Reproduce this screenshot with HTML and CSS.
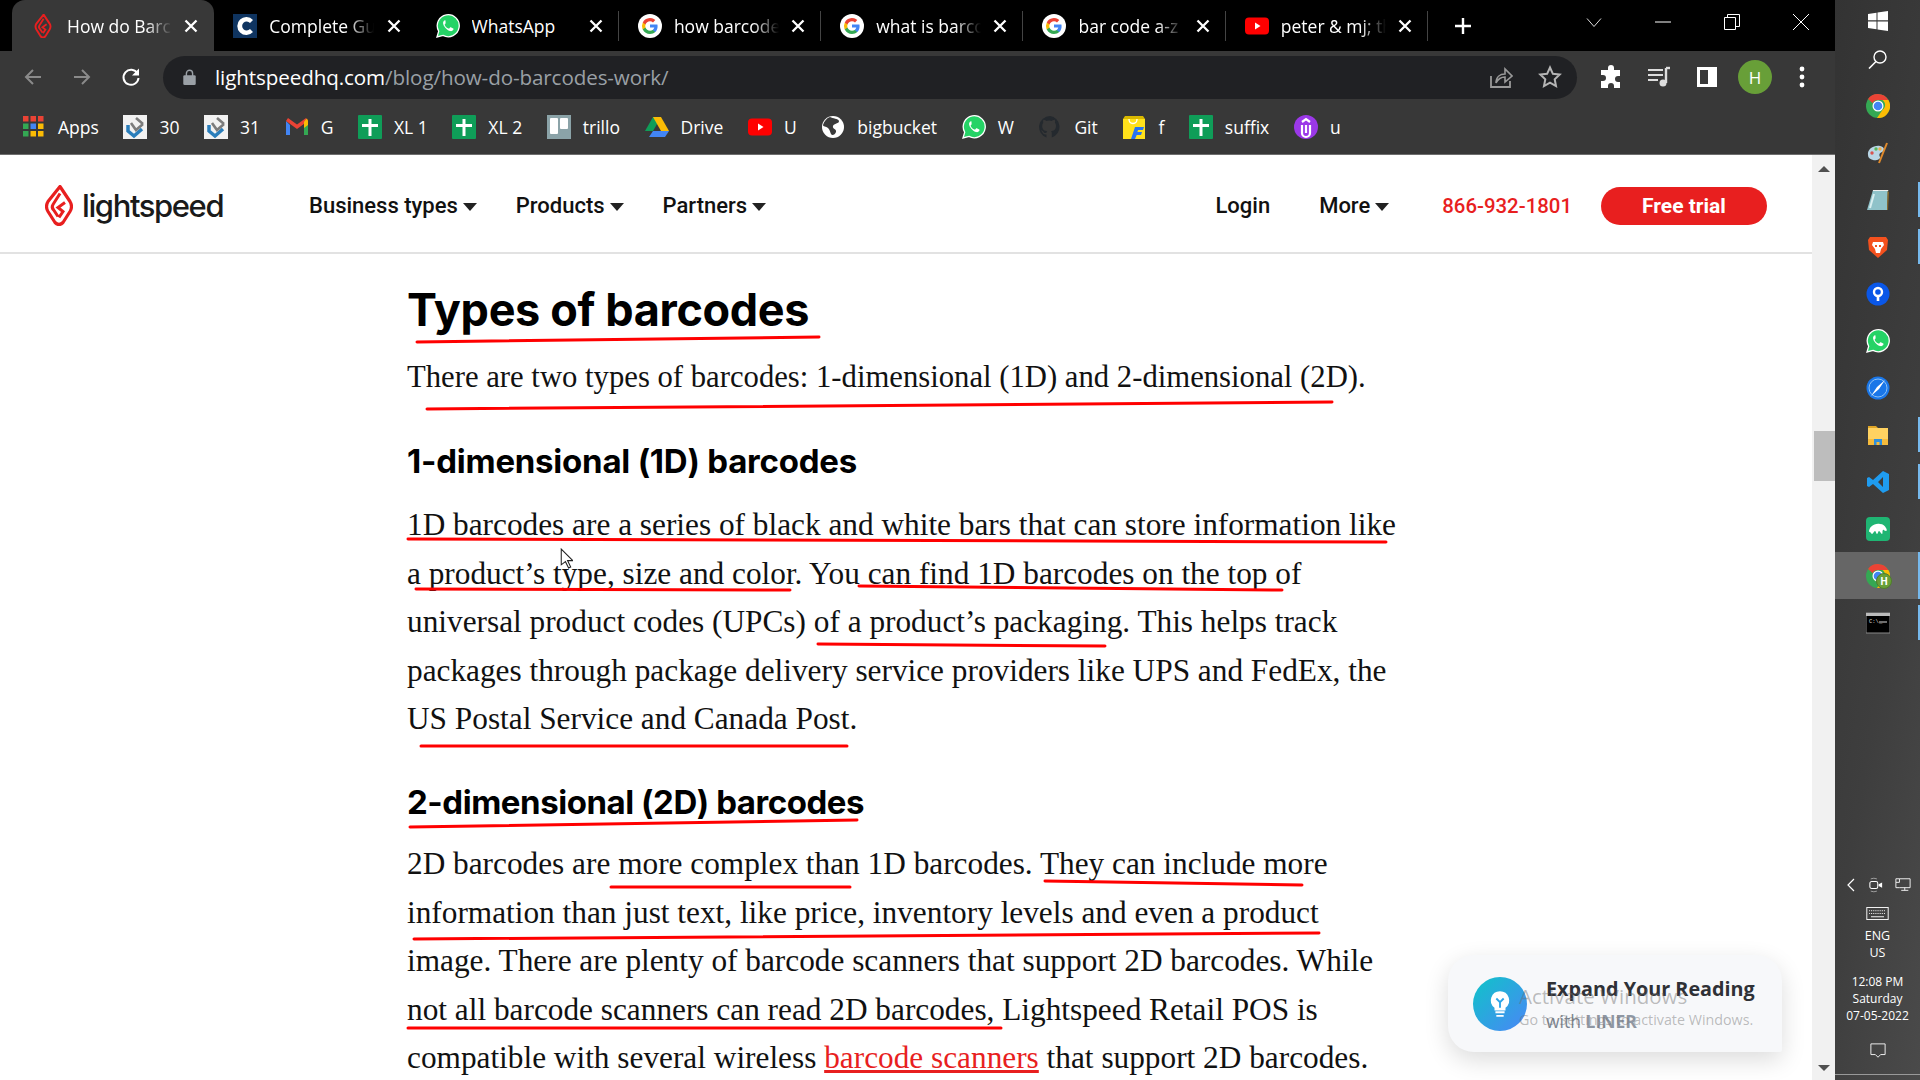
FILE: index.html
```html
<!doctype html>
<html>

<head>
    <meta charset="UTF-8">
    <title>How do Barcodes Work?</title>
    <link rel="stylesheet" href="styles.css">
</head>

<body>
    <svg class="defs" width="0" height="0">
        <symbol id="flame" viewBox="0 0 28 40">
            <path d="M15 1 L25 16 Q28 21 25 26 L18 37 Q14 41 10 37 L3 26 Q0 21 3 16 Z" fill="none" stroke="#e81f1f" stroke-width="3.200" stroke-linejoin="round"/>
            <path d="M15 8 L8 19 Q6 22 9 25 L13 31 M20 17 L13 22 L18 26 L14 32" fill="none" stroke="#e81f1f" stroke-width="3"/>
        </symbol>
        <symbol id="close" viewBox="0 0 14 14">
            <path d="M1.500 1.500l11 11M12.500 1.500l-11 11" stroke="#fff" stroke-width="2.300"/>
        </symbol>
        <symbol id="google" viewBox="0 0 24 24">
            <circle cx="12" cy="12" r="12" fill="#fff"/>
            <path d="M19.600 12.200c0-.6-.1-1.100-.2-1.600H12v3h4.300a3.700 3.700 0 0 1-1.600 2.400v2h2.600c1.500-1.400 2.300-3.400 2.300-5.800z" fill="#4285f4"/>
            <path d="M12 20c2.200 0 4-.7 5.300-2l-2.600-2c-.7.500-1.600.8-2.700.8-2.100 0-3.900-1.400-4.500-3.300H4.800v2.100A8 8 0 0 0 12 20z" fill="#34a853"/>
            <path d="M7.500 13.500a4.800 4.800 0 0 1 0-3V8.400H4.800a8 8 0 0 0 0 7.200z" fill="#fbbc05"/>
            <path d="M12 7.200c1.200 0 2.200.4 3 1.200l2.300-2.300A8 8 0 0 0 4.800 8.400l2.700 2.100C8.100 8.600 9.900 7.200 12 7.200z" fill="#ea4335"/>
        </symbol>
        <symbol id="whatsapp" viewBox="0 0 24 24">
            <path d="M1 23l1.700-5.800A11 11 0 1 1 7 21.400z" fill="#25d366" stroke="#fff" stroke-width="1.300"/>
            <path d="M8.500 6.500c-.6.300-1.600 1.300-1.400 2.900.3 2.500 3.700 6.800 7.200 7.700 1.500.3 2.900-.6 3.200-1.800.1-.5 0-.8-.3-.9l-2.400-1.200c-.4-.1-.6 0-.8.300l-.7 1c-.2.200-.5.200-.8.100-1.700-.7-3-2-3.800-3.600-.1-.3 0-.5.200-.7l.6-.8c.2-.2.2-.5.100-.7L9.500 6.700c-.2-.4-.6-.4-1-.2z" fill="#fff"/>
        </symbol>
        <symbol id="youtube" viewBox="0 0 24 24">
            <rect y="3.500" width="24" height="17" rx="4" fill="#f00"/>
            <path d="M10 8.500v7l5.500-3.500z" fill="#fff"/>
        </symbol>
        <symbol id="sheet" viewBox="0 0 24 24">
            <rect width="24" height="24" rx="1" fill="#0f9d58"/>
            <path d="M10.500 4h3v5h6.500v3h-6.500v9h-3v-9H4V9h6.500z" fill="#fff"/>
        </symbol>
        <symbol id="hr" viewBox="0 0 24 24">
            <rect width="24" height="24" fill="#f2f2f2"/>
            <path d="M5 10v6l6 5 8-7" fill="none" stroke="#2a7ebb" stroke-width="3.500"/>
            <path d="M8 8l5 7 7-6M13 3l7 6" fill="none" stroke="#7c7c7c" stroke-width="2.600"/>
        </symbol>
        <symbol id="chrome" viewBox="0 0 24 24">
            <circle cx="12" cy="12" r="12" fill="#34a853"/>
            <path d="M12 0a12 12 0 0 1 10.400 6H12a6 6 0 0 0-5.300 3.200L2 5A12 12 0 0 1 12 0z" fill="#ea4335"/>
            <path d="M22.400 6A12 12 0 0 1 11 24l5.400-8a6 6 0 0 0 0-10z" fill="#fbbc05"/>
            <circle cx="12" cy="12" r="5.500" fill="#fff"/>
            <circle cx="12" cy="12" r="4.300" fill="#4285f4"/>
        </symbol>
    </svg>

    <div class="browser">
        <div class="tabstrip">
            <div class="tab tab-active">
                <svg class="fav fav-flame"><use href="#flame"/></svg>
                <span class="tab-title">How do Barcodes</span>
                <svg class="tab-x"><use href="#close"/></svg>
            </div>
            <div class="tab">
                <svg class="fav" viewBox="0 0 24 24"><rect width="24" height="24" fill="#0f3460"/><path d="M20 6a9 9 0 1 0 0 12l-3-3a4.500 4.500 0 1 1 0-6z" fill="#fff"/></svg>
                <span class="tab-title">Complete Guide</span>
                <svg class="tab-x"><use href="#close"/></svg>
            </div>
            <div class="tab">
                <svg class="fav"><use href="#whatsapp"/></svg>
                <span class="tab-title tab-title-plain">WhatsApp</span>
                <svg class="tab-x"><use href="#close"/></svg>
            </div>
            <div class="tab">
                <svg class="fav"><use href="#google"/></svg>
                <span class="tab-title">how barcodes</span>
                <svg class="tab-x"><use href="#close"/></svg>
            </div>
            <div class="tab">
                <svg class="fav"><use href="#google"/></svg>
                <span class="tab-title">what is barcode</span>
                <svg class="tab-x"><use href="#close"/></svg>
            </div>
            <div class="tab">
                <svg class="fav"><use href="#google"/></svg>
                <span class="tab-title">bar code a-z</span>
                <svg class="tab-x"><use href="#close"/></svg>
            </div>
            <div class="tab">
                <svg class="fav"><use href="#youtube"/></svg>
                <span class="tab-title">peter &amp; mj; the</span>
                <svg class="tab-x"><use href="#close"/></svg>
            </div>
            <svg class="newtab" viewBox="0 0 18 18"><path d="M9 1v16M1 9h16" stroke="#fff" stroke-width="2.400"/></svg>
            <div class="winctl">
                <svg viewBox="0 0 16 10" class="winbtn winbtn-chev"><path d="M1 1l7 8 7-8" fill="none" stroke="#ddd"/></svg>
                <svg viewBox="0 0 16 16" class="winbtn winbtn-min"><path d="M0 8h16" stroke="#fff"/></svg>
                <svg viewBox="0 0 16 16" class="winbtn winbtn-max"><path d="M.5 3.500h11v12H.5zM3.500 3.500V.5h12v12h-4" fill="none" stroke="#fff"/></svg>
                <svg viewBox="0 0 16 16" class="winbtn winbtn-close"><path d="M0 0l16 16M16 0L0 16" stroke="#fff"/></svg>
            </div>
        </div>

        <div class="toolbar">
            <svg class="navicon" viewBox="0 0 20 20"><path d="M18 10H3M10 3l-7 7 7 7" fill="none" stroke="#8a8a8a" stroke-width="2"/></svg>
            <svg class="navicon" viewBox="0 0 20 20"><path d="M2 10h15M10 3l7 7-7 7" fill="none" stroke="#8a8a8a" stroke-width="2"/></svg>
            <svg class="navicon" viewBox="0 0 20 20"><path d="M16.500 6.500A7.500 7.500 0 1 0 17.500 11" fill="none" stroke="#fff" stroke-width="2"/><path d="M18 1.500v7h-7z" fill="#fff"/></svg>
            <div class="omnibox">
                <svg class="lock" viewBox="0 0 14 18"><path d="M3.500 8V5a3.500 3.500 0 0 1 7 0v3" fill="none" stroke="#9aa0a6" stroke-width="1.600"/><rect y="7" width="14" height="11" rx="1.500" fill="#9aa0a6"/></svg>
                <span class="url">lightspeedhq.com<span class="url-path">/blog/how-do-barcodes-work/</span></span>
                <svg class="omni-icon" viewBox="0 0 24 24"><path d="M2 11v11h19v-6" fill="none" stroke="#9a9a9a" stroke-width="1.800"/><path d="M7 18c0-6 4-9 9-9V4l7 7-7 6v-5c-4 0-7 2-9 6z" fill="none" stroke="#9a9a9a" stroke-width="1.600"/></svg>
                <svg class="omni-icon" viewBox="0 0 24 24"><path d="M12 2.500l2.900 6.300 6.800.8-5 4.700 1.300 6.800-6-3.400-6 3.400 1.300-6.800-5-4.700 6.800-.8z" fill="none" stroke="#b5b5b5" stroke-width="2"/></svg>
            </div>
            <div class="toolbar-right">
                <svg class="tool-icon" viewBox="0 0 24 24"><path d="M9 3a3 3 0 0 1 6 0v2h6v6h-2a3 3 0 0 0 0 6h2v6h-6v-2a3 3 0 0 0-6 0v2H2v-7h2a3 3 0 0 0 0-6H2V5h7z" fill="#fff"/></svg>
                <svg class="tool-icon" viewBox="0 0 24 24"><path d="M1 5h15M1 10h15M1 15h10" stroke="#ddd" stroke-width="2.200"/><path d="M19 3v15" stroke="#ddd" stroke-width="2.400"/><path d="M19 3h4" stroke="#ddd" stroke-width="2.400"/><circle cx="16" cy="18" r="3.500" fill="#ddd"/></svg>
                <svg class="tool-icon" viewBox="0 0 24 24"><rect x="2" y="2" width="20" height="20" fill="#fff"/><rect x="5" y="5" width="8" height="14" fill="#383838"/></svg>
                <span class="avatar">H</span>
                <svg class="tool-icon tool-dots" viewBox="0 0 6 24"><circle cx="3" cy="4" r="2.400" fill="#fff"/><circle cx="3" cy="12" r="2.400" fill="#fff"/><circle cx="3" cy="20" r="2.400" fill="#fff"/></svg>
            </div>
        </div>

        <div class="bookmarks">
            <div class="bm">
                <svg class="bm-icon" viewBox="0 0 21 21"><rect width="5.500" height="5.500" fill="#ea4335"/><rect x="7.500" width="5.500" height="5.500" fill="#ea4335"/><rect x="15" width="5.500" height="5.500" fill="#ea4335"/><rect y="7.500" width="5.500" height="5.500" fill="#34a853"/><rect x="7.500" y="7.500" width="5.500" height="5.500" fill="#4285f4"/><rect x="15" y="7.500" width="5.500" height="5.500" fill="#fbbc05"/><rect y="15" width="5.500" height="5.500" fill="#34a853"/><rect x="7.500" y="15" width="5.500" height="5.500" fill="#fbbc05"/><rect x="15" y="15" width="5.500" height="5.500" fill="#fbbc05"/></svg>
                Apps
            </div>
            <div class="bm"><svg class="bm-icon"><use href="#hr"/></svg>30</div>
            <div class="bm"><svg class="bm-icon"><use href="#hr"/></svg>31</div>
            <div class="bm">
                <svg class="bm-icon" viewBox="0 0 24 24"><path d="M1 6v14h4V10z" fill="#4285f4"/><path d="M23 6v14h-4V10z" fill="#34a853"/><path d="M1 6l11 8 11-8-2-3-9 6.500L3 3z" fill="#ea4335"/><path d="M19 6.500l3-3 1 2.500v4l-4 3z" fill="#fbbc05"/></svg>
                G
            </div>
            <div class="bm"><svg class="bm-icon"><use href="#sheet"/></svg>XL 1</div>
            <div class="bm"><svg class="bm-icon"><use href="#sheet"/></svg>XL 2</div>
            <div class="bm">
                <svg class="bm-icon" viewBox="0 0 24 24"><rect width="24" height="24" fill="#8ba3a8"/><rect x="3" y="3" width="8" height="16" rx="1" fill="#fff"/><rect x="13" y="3" width="8" height="11" rx="1" fill="#fff"/></svg>
                trillo
            </div>
            <div class="bm">
                <svg class="bm-icon" viewBox="0 0 24 24"><path d="M8 2h8l-8 14H0z" fill="#0f9d58"/><path d="M16 2l8 14h-8L8 2z" fill="#fbbc05"/><path d="M4 22l4-6h16l-4 6z" fill="#4285f4"/></svg>
                Drive
            </div>
            <div class="bm"><svg class="bm-icon"><use href="#youtube"/></svg>U</div>
            <div class="bm">
                <svg class="bm-icon" viewBox="0 0 24 24"><circle cx="12" cy="12" r="11" fill="#fff"/><path d="M9 2c3 2 8 1 9 4 0 3-5 2-6 5s4 3 3 6-4 4-5 2-1-4-3-6-5-1-5-3c1-4 4-7 7-8z" fill="#3a3a3a"/></svg>
                bigbucket
            </div>
            <div class="bm"><svg class="bm-icon"><use href="#whatsapp"/></svg>W</div>
            <div class="bm">
                <svg class="bm-icon" viewBox="0 0 24 24"><path d="M12 1a11 11 0 0 0-3.500 21.400v-3c-3 .6-3.700-1.400-3.700-1.400-.6-1.300-1.300-1.700-1.300-1.700-1-.7.100-.7.100-.7 1.100.1 1.700 1.200 1.700 1.200 1 1.700 2.600 1.200 3.200.9.100-.7.400-1.200.7-1.500-2.500-.3-5-1.200-5-5.400 0-1.200.4-2.200 1.100-3-.1-.3-.5-1.400.1-2.900 0 0 .9-.3 3 1.100a10 10 0 0 1 5.400 0c2.100-1.400 3-1.100 3-1.100.6 1.500.2 2.600.1 2.900.7.800 1.100 1.800 1.100 3 0 4.200-2.500 5.100-5 5.400.4.300.8 1 .8 2v4.200A11 11 0 0 0 12 1z" fill="#24292e"/></svg>
                Git
            </div>
            <div class="bm">
                <svg class="bm-icon" viewBox="0 0 24 24"><path d="M1 4h22v20H1z" fill="#ffe11b"/><path d="M1 4l2-3h18l2 3z" fill="#d9b800"/><path d="M7 4c0 6 8 6 8 0" fill="none" stroke="#fff" stroke-width="1.300"/><path d="M13 12h9l-1 3h-5l-.6 2H20l-1 3h-4.300L13 24H9z" fill="#2874f0"/></svg>
                f
            </div>
            <div class="bm"><svg class="bm-icon"><use href="#sheet"/></svg>suffix</div>
            <div class="bm">
                <svg class="bm-icon" viewBox="0 0 24 24"><circle cx="12" cy="12" r="12" fill="#9b38e8"/><path d="M8 10v8a4 4 0 0 0 8 0v-8" fill="none" stroke="#fff" stroke-width="2.200"/><path d="M12 10v8M8 7l4-3 4 3" fill="none" stroke="#fff" stroke-width="2.200"/></svg>
                u
            </div>
        </div>

        <div class="page">
            <div class="content">
                <header class="site-nav">
                    <div class="logo">
                        <svg class="logo-mark"><use href="#flame"/></svg>
                        <span class="logo-text">lightspeed</span>
                    </div>
                    <nav class="nav-left">
                        <a class="nav-link">Business types<i class="caret"></i></a>
                        <a class="nav-link">Products<i class="caret"></i></a>
                        <a class="nav-link">Partners<i class="caret"></i></a>
                    </nav>
                    <nav class="nav-right">
                        <a class="nav-link">Login</a>
                        <a class="nav-link">More<i class="caret"></i></a>
                        <a class="phone">866-932-1801</a>
                        <a class="trial">Free trial</a>
                    </nav>
                </header>

                <article class="article">
                    <h2>Types of barcodes</h2>
                    <p class="lead">There are two types of barcodes: 1-dimensional (1D) and 2-dimensional (2D).</p>
                    <h3>1-dimensional (1D) barcodes</h3>
                    <p>1D barcodes are a series of black and white bars that can store information like<br>
                    a product’s type, size and color. You can find 1D barcodes on the top of<br>
                    universal product codes (UPCs) of a product’s packaging. This helps track<br>
                    packages through package delivery service providers like UPS and FedEx, the<br>
                    US Postal Service and Canada Post.</p>
                    <h3 class="h3-next">2-dimensional (2D) barcodes</h3>
                    <p>2D barcodes are more complex than 1D barcodes. They can include more<br>
                    information than just text, like price, inventory levels and even a product<br>
                    image. There are plenty of barcode scanners that support 2D barcodes. While<br>
                    not all barcode scanners can read 2D barcodes, Lightspeed Retail POS is<br>
                    compatible with several wireless <a class="link">barcode scanners</a> that support 2D barcodes.</p>
                </article>
            </div>
            <div class="scrollbar">
                <i class="arrow-up"></i>
                <div class="track"><div class="thumb"></div></div>
                <i class="arrow-down"></i>
            </div>
        </div>
    </div>

    <aside class="taskbar">
        <div class="task task-start">
            <svg class="task-icon-sm" viewBox="0 0 20 20"><path d="M0 3l8.500-1.300v7.600H0zM9.500 1.500L20 0v9.300H9.500zM0 10.500h8.500v7.800L0 17zM9.500 10.500H20V20L9.500 18.500z" fill="#fff"/></svg>
        </div>
        <div class="task task-search">
            <svg class="task-icon-sm" viewBox="0 0 20 20"><circle cx="12" cy="8" r="6" fill="none" stroke="#fff" stroke-width="1.400"/><path d="M8 12.500L1 19.500" stroke="#fff" stroke-width="1.600"/></svg>
        </div>
        <div class="task task-first"><svg class="task-icon"><use href="#chrome"/></svg></div>
        <div class="task">
            <svg class="task-icon" viewBox="0 0 24 24"><path d="M2 14C1 8 8 4 14 5c5 1 5 5 2 6s-3 3-2 5-4 4-7 3-5-2-5-5z" fill="#b9d6e6"/><circle cx="6" cy="12" r="1.700" fill="#d9534f"/><circle cx="10" cy="8" r="1.700" fill="#5cb85c"/><circle cx="14" cy="8" r="1.700" fill="#f0ad4e"/><path d="M21 2L13 22" stroke="#e08a2c" stroke-width="2"/></svg>
        </div>
        <div class="task task-running">
            <svg class="task-icon" viewBox="0 0 24 24"><path d="M7 2h15l-1 20H1z" fill="#8fc2c9"/><path d="M7 2h15l.5 1H7z" fill="#eee"/><path d="M21.500 3L23 4l-1 18-1 0z" fill="#8a6a2c"/><path d="M4 20l4-14" stroke="#d8eef0" stroke-width="2"/></svg>
        </div>
        <div class="task task-running">
            <svg class="task-icon" viewBox="0 0 24 24"><path d="M4 2h16l2 3-1 10-9 8-9-8-1-10z" fill="#f4511e"/><path d="M7 7h10l1 3-3 4-1 4h-4l-1-4-3-4z" fill="#fff"/><path d="M9 10h2v2H9zM13 10h2v2h-2z" fill="#f4511e"/></svg>
        </div>
        <div class="task">
            <svg class="task-icon" viewBox="0 0 24 24"><circle cx="12" cy="12" r="11.500" fill="#0a57e8"/><circle cx="12" cy="10" r="4" fill="none" stroke="#fff" stroke-width="2.400"/><path d="M12 14v5" stroke="#fff" stroke-width="2.600"/></svg>
        </div>
        <div class="task"><svg class="task-icon"><use href="#whatsapp"/></svg></div>
        <div class="task">
            <svg class="task-icon" viewBox="0 0 24 24"><circle cx="12" cy="12" r="11.500" fill="#1976e8"/><circle cx="12" cy="12" r="9" fill="none" stroke="#8cc1f5"/><path d="M19 4L11 11l2 2zM5 20l8-7-2-2z" fill="#fff"/></svg>
        </div>
        <div class="task task-running">
            <svg class="task-icon" viewBox="0 0 24 24"><path d="M2 3h8l2 2H2z" fill="#e0a526"/><rect x="2" y="5" width="20" height="17" fill="#ffd261"/><rect x="2" y="16" width="20" height="6" fill="#f6bb3c"/><path d="M8 22v-6h8v6h-2.500v-3h-3v3z" fill="#2f8fdc"/></svg>
        </div>
        <div class="task task-running">
            <svg class="task-icon" viewBox="0 0 24 24"><path d="M17 1l6 3v16l-6 3L7 14l-4 3-2-1V8l2-1 4 3zm0 6l-5 5 5 5z" fill="#1f9cf0"/></svg>
        </div>
        <div class="task">
            <svg class="task-icon" viewBox="0 0 24 24"><rect width="24" height="24" rx="4" fill="#1fb573"/><path d="M3 15c0-5 5-9 11-8 3 0 5 2 6 4 1 1 1 3 0 3-2 0-2-2-3-1s0 4-1 4-2-3-3-3-1 3-2 3-1-3-2-3-2 3-3 3-2-3-3-2z" fill="#fff"/></svg>
        </div>
        <div class="task task-running task-active">
            <svg class="task-icon" viewBox="0 0 24 24"><use href="#chrome"/></svg>
            <span class="task-badge">H</span>
        </div>
        <div class="task task-running">
            <svg class="task-icon" viewBox="0 0 24 20"><rect width="24" height="20" fill="#000" stroke="#888"/><rect width="24" height="3" fill="#bbb"/><text x="3" y="10" fill="#ddd" font-size="5.500" font-family="Liberation Mono">C:\_</text><path d="M13 9h8" stroke="#ddd"/></svg>
        </div>

        <div class="tray">
            <div class="tray-row">
                <svg class="tray-icon" viewBox="0 0 10 16"><path d="M8 2L2 8l6 6" fill="none" stroke="#fff" stroke-width="1.200"/></svg>
                <svg class="tray-icon" viewBox="0 0 16 18"><rect x="1" y="5" width="9" height="8" rx="2" fill="none" stroke="#fff" stroke-width="1.200"/><path d="M11 8l4-2v6l-4-2z" fill="#fff"/><path d="M2 2q3.500-1.500 7 0M2 16q3.500 1.500 7 0" fill="none" stroke="#aaa"/></svg>
                <svg class="tray-icon tray-icon-wide" viewBox="0 0 18 16"><path d="M5 1h12v10H5M1 1h4v4H1zM1 5v6h4M11 11v3M7 14h8" fill="none" stroke="#fff"/></svg>
            </div>
            <svg class="tray-keyboard" viewBox="0 0 24 14"><rect x=".5" y=".5" width="23" height="13" fill="none" stroke="#fff"/><path d="M3 4h18M3 7h18" stroke="#fff" stroke-dasharray="1 1"/><path d="M5 10.500h14" stroke="#fff"/></svg>
            <div class="tray-lang">ENG<br>US</div>
            <div class="tray-clock">12:08 PM<br>Saturday<br>07-05-2022</div>
            <svg class="tray-note" viewBox="0 0 18 18"><path d="M1 1h16v12h-5l-3 3-3-3H1z" fill="none" stroke="#fff"/></svg>
        </div>
    </aside>

    <svg class="scribbles" viewBox="0 0 1920 1080">
        <g fill="none" stroke="#f00" stroke-width="3" stroke-linecap="round">
            <path d="M417 342L819 337"/>
            <path d="M427 409L1332 402"/>
            <path d="M408 539L1386 542"/>
            <path d="M416 589L790 590"/>
            <path d="M859 586L1282 590"/>
            <path d="M818 644L1105 646"/>
            <path d="M421 746L847 746"/>
            <path d="M410 827L857 820"/>
            <path d="M611 887L850 887"/>
            <path d="M1045 881L1302 885"/>
            <path d="M414 939L1319 933"/>
            <path d="M408 1028L1001 1028"/>
        </g>
    </svg>

    <svg class="cursor" viewBox="0 0 12 20"><path d="M1 1v15l4-3 3 6 2-1-3-6h5z" fill="#fff" stroke="#222"/></svg>

    <div class="liner">
        <div class="liner-badge">
            <svg viewBox="0 0 24 30" class="liner-bulb"><path d="M12 1a10 10 0 0 0-6 18v3h12v-3a10 10 0 0 0-6-18z" fill="#fff"/><path d="M8 9l4 4 4-4M12 13v6" fill="none" stroke="#2ba4e8" stroke-width="2"/><path d="M7 24h10M8 28h8" stroke="#fff" stroke-width="2"/></svg>
        </div>
        <div class="liner-text">
            <div class="liner-title">Expand Your Reading</div>
            <div class="liner-sub">with <b>LINER</b></div>
        </div>
    </div>

    <div class="activate">
        <div class="activate-big">Activate Windows</div>
        <div class="activate-small">Go to Settings to activate Windows.</div>
    </div>
</body>

</html>
```
FILE: styles.css
```css
* {
    margin: 0;
    padding: 0;
    box-sizing: border-box;
}

body {
    width: 1920px;
    height: 1080px;
    overflow: hidden;
    display: flex;
    position: relative;
    background: #000;
    font-family: "Open Sans", "Noto Sans", sans-serif;
}

.defs {
    position: absolute;
}

.browser {
    width: 1835px;
    height: 1080px;
    display: flex;
    flex-direction: column;
}

/* tabs */
.tabstrip {
    height: 51px;
    flex: none;
    background: #000;
    display: flex;
    align-items: stretch;
    padding-left: 12px;
}
.tab {
    width: 202.300px;
    height: 51px;
    flex: none;
    display: flex;
    align-items: center;
    padding: 0 16px 0 19px;
    color: #fff;
    font-size: 17.500px;
    position: relative;
}
.tab:not(.tab-active)::after {
    content: "";
    position: absolute;
    right: 0;
    top: 11px;
    height: 30px;
    width: 1px;
    background: #444;
}
.tab:nth-child(2)::after {
    display: none;
}
.tab-active {
    background: #383838;
    border-radius: 13px 13px 0 0;
}
.fav {
    width: 24px;
    height: 24px;
    flex: none;
    margin-right: 12px;
}
.tab-title {
    width: 105px;
    flex: none;
    overflow: hidden;
    white-space: nowrap;
    -webkit-mask-image: linear-gradient(90deg, #000 75%, transparent 100%);
    mask-image: linear-gradient(90deg, #000 75%, transparent 100%);
}
.tab-title-plain {
    -webkit-mask-image: none;
    mask-image: none;
}
.tab-x {
    width: 14px;
    height: 14px;
    flex: none;
    margin-left: auto;
}
.newtab {
    width: 18px;
    height: 18px;
    flex: none;
    align-self: center;
    margin-left: 26px;
}
.winctl {
    margin-left: auto;
    display: flex;
    align-items: center;
    height: 44px;
    padding-right: 26px;
}
.winbtn {
    width: 16px;
    height: 16px;
    margin-left: 53px;
}
.winbtn-chev {
    height: 11px;
}

/* toolbar */
.toolbar {
    height: 53px;
    flex: none;
    background: #383838;
    display: flex;
    align-items: center;
    padding: 0 0 1px 23px;
}
.navicon {
    width: 20px;
    height: 20px;
    flex: none;
    margin-right: 29px;
}
.navicon:nth-child(3) {
    margin-right: 22px;
}
.omnibox {
    width: 1414px;
    height: 43px;
    border-radius: 22px;
    background: #202124;
    display: flex;
    align-items: center;
    padding-left: 20px;
    flex: none;
}
.lock {
    width: 13px;
    height: 16px;
    flex: none;
    margin-right: 19px;
}
.url {
    color: #fff;
    font-size: 20.600px;
    letter-spacing: -0.1px;
}
.url-path {
    color: #9aa0a6;
}
.omni-icon {
    width: 24px;
    height: 24px;
    flex: none;
    margin-left: 25px;
}
.omni-icon:nth-of-type(2) {
    margin-left: auto;
}
.omni-icon:last-child {
    margin-right: 15px;
}
.toolbar-right {
    display: flex;
    align-items: center;
    margin-left: 22px;
}
.tool-icon {
    width: 24px;
    height: 24px;
    flex: none;
    margin-right: 24px;
}
.tool-dots {
    width: 6px;
    margin-left: 27px;
}
.avatar {
    width: 34px;
    height: 34px;
    border-radius: 50%;
    background: #689f38;
    color: #fff;
    font-size: 17px;
    display: flex;
    align-items: center;
    justify-content: center;
    margin-left: -5px;
}

/* bookmarks */
.bookmarks {
    height: 51px;
    flex: none;
    background: #383838;
    border-bottom: 1px solid #6e6e6e;
    display: flex;
    align-items: center;
    gap: 24.600px;
    padding: 0 0 5px 23px;
    color: #fff;
    font-size: 17.500px;
}
.bm {
    display: flex;
    align-items: center;
    gap: 12px;
    white-space: nowrap;
}
.bm-icon {
    width: 24px;
    height: 24px;
    flex: none;
}
.bm:first-child {
    gap: 14px;
}
.bm:first-child .bm-icon {
    width: 21px;
    height: 21px;
}

/* page */
.page {
    flex: 1;
    display: flex;
    min-height: 0;
    background: #fff;
}
.content {
    flex: 1;
    min-width: 0;
    overflow: hidden;
}
.site-nav {
    height: 99px;
    border-bottom: 2px solid #e2e2e2;
    display: flex;
    align-items: center;
    padding: 4px 45px 0;
    font-family: "Roboto", sans-serif;
}
.logo {
    display: flex;
    align-items: center;
    width: 264px;
    flex: none;
}
.logo-mark {
    width: 28px;
    height: 41px;
    flex: none;
}
.logo-text {
    margin-left: 9px;
    font-family: "Inter", sans-serif;
    font-size: 31px;
    font-weight: 500;
    letter-spacing: -1.400px;
    color: #1a1a1a;
}
.nav-left,
.nav-right {
    display: flex;
    align-items: center;
}
.nav-left {
    gap: 39px;
}
.nav-right {
    margin-left: auto;
}
.nav-link {
    color: #111;
    font-size: 22px;
    font-weight: 500;
    white-space: nowrap;
    display: flex;
    align-items: center;
}
.caret {
    width: 0;
    height: 0;
    margin-left: 5px;
    margin-top: 3px;
    border-left: 7.500px solid transparent;
    border-right: 7.500px solid transparent;
    border-top: 8px solid #222;
}
.nav-right .nav-link:first-child {
    margin-right: 49px;
}
.phone {
    margin-left: 53px;
    color: #e81f1f;
    font-size: 20.400px;
    font-weight: 500;
}
.trial {
    margin-left: 29px;
    width: 166px;
    height: 38px;
    border-radius: 19px;
    background: #e81f1f;
    color: #fff;
    font-size: 21px;
    font-weight: 700;
    display: flex;
    align-items: center;
    justify-content: center;
}

/* article */
.article {
    padding: 29px 0 0 407px;
    color: #111;
    font-family: "Liberation Serif", serif;
    font-size: 31.300px;
    line-height: 48.400px;
    white-space: nowrap;
}
.article h2 {
    font-family: "Inter", sans-serif;
    font-size: 45px;
    line-height: 53px;
    font-weight: 700;
    color: #000;
    letter-spacing: -0.350px;
    margin-bottom: 17px;
}
.article .lead {
    font-size: 30.700px;
}
.article h3 {
    font-family: "Inter", sans-serif;
    font-size: 33px;
    line-height: 40px;
    font-weight: 700;
    color: #000;
    margin: 40px 0 20px;
    letter-spacing: -0.230px;
}
.article .h3-next {
    margin: 39px 0 18px;
    letter-spacing: -0.450px;
}
.article .link {
    color: #e81f1f;
    text-decoration: underline;
}

/* scrollbar */
.scrollbar {
    width: 23px;
    flex: none;
    background: #f1f1f1;
    display: flex;
    flex-direction: column;
    align-items: center;
}
.arrow-up,
.arrow-down {
    width: 0;
    height: 0;
    border-left: 6px solid transparent;
    border-right: 6px solid transparent;
    flex: none;
}
.arrow-up {
    margin-top: 11px;
    border-bottom: 6px solid #505050;
}
.arrow-down {
    margin-bottom: 9px;
    border-top: 6px solid #505050;
}
.track {
    flex: 1;
    width: 100%;
    padding: 259px 0 0 2px;
}
.thumb {
    height: 50px;
    background: #bdbdbd;
}

/* taskbar */
.taskbar {
    width: 85px;
    height: 1080px;
    flex: none;
    background: linear-gradient(100deg, #333 0%, #3e3e3e 60%, #4a4a4a 100%);
    display: flex;
    flex-direction: column;
    align-items: stretch;
    color: #fff;
}
.task {
    height: 47px;
    flex: none;
    display: flex;
    align-items: center;
    justify-content: center;
    position: relative;
}
.task-start {
    height: 40px;
    padding-top: 2px;
}
.task-search {
    height: 38px;
}
.task-first {
    margin-top: 4px;
}
.task-icon {
    width: 24px;
    height: 24px;
}
.task-icon-sm {
    width: 20px;
    height: 20px;
}
.task-running::after {
    content: "";
    position: absolute;
    right: 0;
    top: 6px;
    bottom: 6px;
    width: 2px;
    background: #76b9ed;
}
.task-active {
    background: #666;
}
.task-active::after {
    top: 0;
    bottom: 0;
}
.task-badge {
    position: absolute;
    left: 41px;
    top: 21px;
    width: 16px;
    height: 16px;
    border-radius: 50%;
    background: #689f38;
    border: 1px solid #4f7f2a;
    font-size: 10px;
    font-weight: 700;
    text-align: center;
    line-height: 14px;
}
.tray {
    margin-top: auto;
    height: 205px;
    padding-top: 5px;
    display: flex;
    flex-direction: column;
    align-items: center;
    border-bottom: 1px solid #999;
    margin-bottom: 5px;
    text-align: center;
    font-size: 12.500px;
    line-height: 17px;
}
.tray-row {
    display: flex;
    align-items: center;
    gap: 12px;
    height: 20px;
}
.tray-icon {
    width: 12px;
    height: 16px;
}
.tray-icon:nth-child(2) {
    width: 14px;
}
.tray-icon-wide {
    width: 16px;
}
.tray-keyboard {
    width: 23px;
    height: 13px;
    margin-top: 12px;
}
.tray-lang {
    margin-top: 7px;
}
.tray-clock {
    margin-top: 12px;
    font-size: 12px;
}
.tray-note {
    width: 16px;
    height: 16px;
    margin-top: 19px;
}

/* things that sit on top of the page */
.scribbles {
    position: absolute;
    left: 0;
    top: 0;
    width: 1920px;
    height: 1080px;
    pointer-events: none;
}
.cursor {
    position: absolute;
    left: 560px;
    top: 548px;
    width: 13px;
    height: 21px;
}
.liner {
    position: absolute;
    left: 1448px;
    top: 955px;
    width: 334px;
    height: 97px;
    background: #f7f8fa;
    border-radius: 26px 26px 2px 26px;
    box-shadow: 0 8px 24px rgba(0, 0, 0, 0.14);
    display: flex;
    align-items: center;
    padding-left: 25px;
}
.liner-badge {
    width: 54px;
    height: 54px;
    flex: none;
    border-radius: 50%;
    background: linear-gradient(135deg, #0fc4c8, #4a86f7);
    display: flex;
    align-items: center;
    justify-content: center;
}
.liner-bulb {
    width: 22px;
    height: 30px;
}
.liner-text {
    margin-left: 19px;
    color: #2f3136;
}
.liner-title {
    font-size: 19.800px;
    font-weight: 700;
    line-height: 26px;
}
.liner-sub {
    margin-top: 8px;
    font-size: 17.500px;
    line-height: 22px;
    color: #7d8590;
}
.liner-sub b {
    color: #8f97a3;
}
.activate {
    position: absolute;
    left: 1519px;
    top: 982px;
    color: rgba(110, 110, 110, 0.45);
    white-space: nowrap;
}
.activate-big {
    font-size: 20.500px;
    line-height: 28px;
}
.activate-small {
    font-size: 14.300px;
    line-height: 20px;
}
```
